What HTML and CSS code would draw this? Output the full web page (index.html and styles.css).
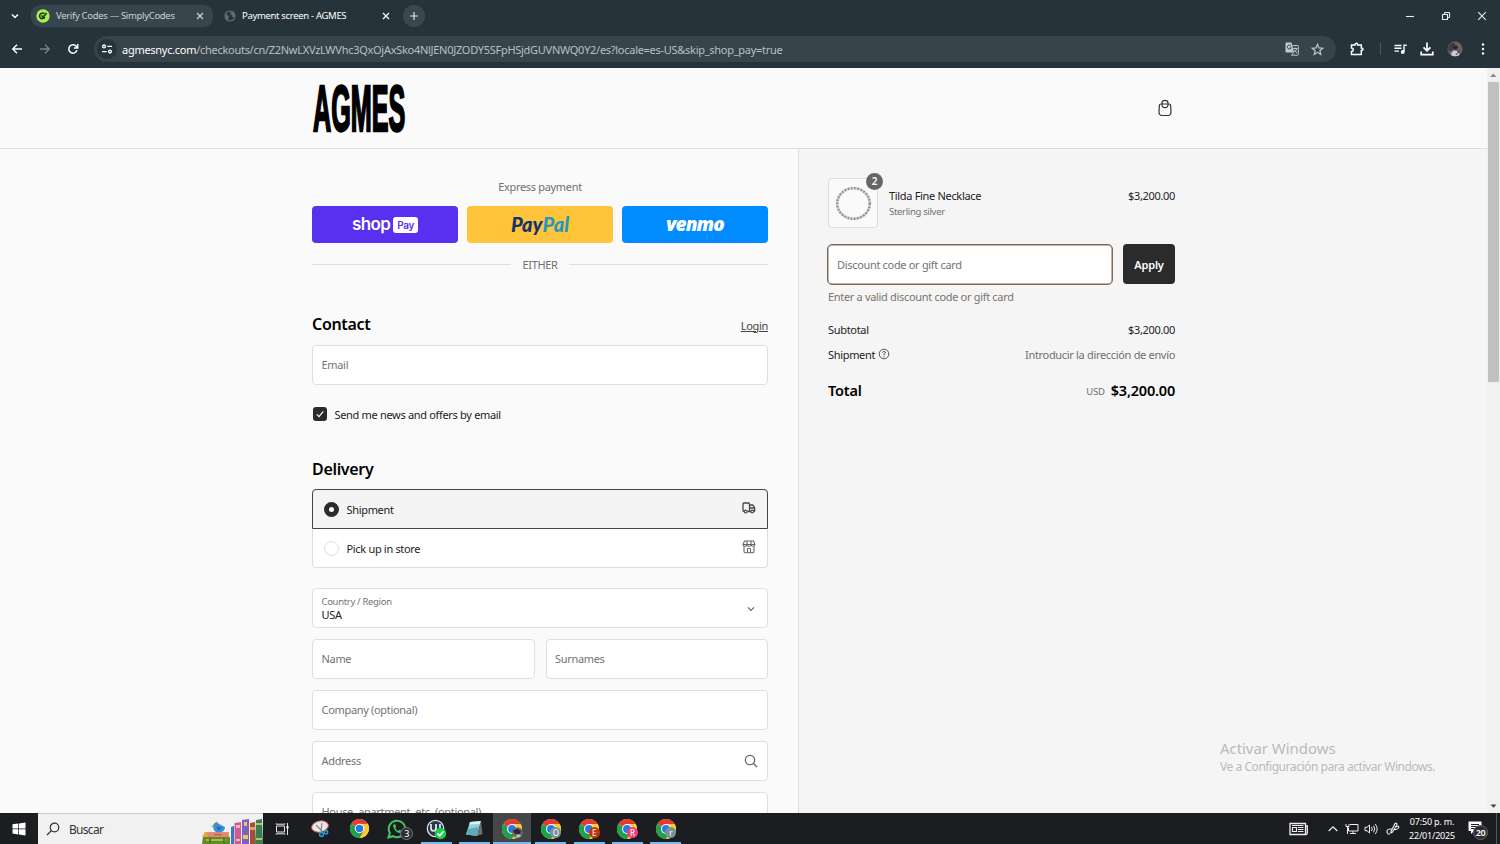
FILE: index.html
```
<!DOCTYPE html>
<html lang="en">
<head>
  <meta charset="UTF-8">
  <meta name="viewport" content="width=device-width, initial-scale=1.0">
  <title>Payment screen - AGMES</title>
  <link rel="stylesheet" href="styles.css">
</head>
<body>
  <!-- Shared icons -->
  <svg class="sprite" width="0" height="0">
    <symbol id="chrome" viewBox="0 0 24 24">
      <circle cx="12" cy="12" r="12" fill="#fff"/>
      <path d="M12 12 1.6 6A12 12 0 0 1 22.4 6Z" fill="#e33b2e"/>
      <path d="M12 12 22.4 6A12 12 0 0 1 12 24Z" fill="#fcc934"/>
      <path d="M12 12 12 24A12 12 0 0 1 1.6 6Z" fill="#1fa04b"/>
      <path d="M12 6H22.4L17.2 15Z" fill="#fcc934"/>
      <path d="M12 6H22.4L21.5 5H11Z" fill="#e33b2e"/>
      <path d="M17.2 15 12 24 8 17Z" fill="#1fa04b"/>
      <circle cx="12" cy="12" r="6" fill="#fff"/>
      <circle cx="12" cy="12" r="4.7" fill="#2b78e4"/>
    </symbol>
    <symbol id="close" viewBox="0 0 10 10">
      <path d="M2 2 8 8M8 2 2 8" fill="none" stroke="currentColor" stroke-width="1.2"/>
    </symbol>
  </svg>

  <div class="window">
    <!-- Browser tabs -->
    <div class="tabs">
      <svg class="tabs__menu" width="10" height="10" viewBox="0 0 10 10"><path d="M2 3.5 5 6.5 8 3.5" fill="none" stroke="#fff" stroke-width="1.5"/></svg>
      <div class="tab tab--idle">
        <svg width="14" height="14" viewBox="0 0 14 14"><circle cx="7" cy="7" r="6.7" fill="#a5f04c"/><path d="M8.5 4.3H5.8a2.7 2.7 0 1 0 3 3.6M5.6 6.4 7 8.2 10.6 4" fill="none" stroke="#18351d" stroke-width="1.5"/></svg>
        <span class="tab__title">Verify Codes — SimplyCodes</span>
        <svg class="tab__close" width="10" height="10"><use href="#close"/></svg>
      </div>
      <div class="tab tab--active">
        <svg width="12" height="12" viewBox="0 0 12 12"><circle cx="6" cy="6" r="5" fill="none" stroke="#646d72" stroke-width="1.2"/><path d="M1 4 4 5.2 5.2 7 4 8.2 4.6 10.7 2.2 9.6ZM5.5 1.2 8.7 1.8 10.8 5 10.6 7.6 8.2 6.8 8 5 6 4.6 7 3Z" fill="#646d72"/></svg>
        <span class="tab__title">Payment screen - AGMES</span>
        <svg class="tab__close" width="10" height="10"><use href="#close"/></svg>
      </div>
      <div class="tabs__new"><svg width="10" height="10" viewBox="0 0 10 10"><path d="M5 1V9M1 5H9" stroke="#dde3e5" stroke-width="1.2"/></svg></div>
      <div class="tabs__controls">
        <svg width="10" height="10" viewBox="0 0 10 10"><path d="M1 5.5H9" stroke="#e8eced" stroke-width="1.1"/></svg>
        <svg width="10" height="10" viewBox="0 0 10 10"><path d="M1.5 3.5H6.5V8.5H1.5ZM3.5 3.5V2Q3.5 1.5 4 1.5H8Q8.5 1.5 8.5 2V6Q8.5 6.5 8 6.5H6.5" fill="none" stroke="#e8eced" stroke-width="1.1"/></svg>
        <svg width="10" height="10" viewBox="0 0 10 10"><path d="M1.2 1.2 8.8 8.8M8.8 1.2 1.2 8.8" stroke="#e8eced" stroke-width="1.1"/></svg>
      </div>
    </div>

    <!-- Address bar -->
    <div class="toolbar">
      <div class="toolbar__nav">
        <svg width="12" height="12" viewBox="0 0 12 12"><path d="M11 6H2M6 1.7 1.7 6 6 10.3" fill="none" stroke="#fff" stroke-width="1.4"/></svg>
        <svg width="12" height="12" viewBox="0 0 12 12"><path d="M1 6H10M6 1.7 10.3 6 6 10.3" fill="none" stroke="#79848a" stroke-width="1.3"/></svg>
        <svg width="12" height="12" viewBox="0 0 12 12"><path d="M10 7.3A4.2 4.2 0 1 1 9.2 3.2L10.5 4.7M10.7 1V4.9H6.9" fill="none" stroke="#fff" stroke-width="1.5"/></svg>
      </div>
      <div class="omnibox">
        <div class="omnibox__site"><svg width="12" height="12" viewBox="0 0 12 12"><g fill="none" stroke="#fff" stroke-width="1.3"><circle cx="3" cy="3.4" r="1.4"/><path d="M6.3 3.4H11M1 8.6H5.7"/><circle cx="9" cy="8.6" r="1.4"/></g></svg></div>
        <div class="omnibox__url"><b>agmesnyc.com</b>/checkouts/cn/Z2NwLXVzLWVhc3QxOjAxSko4NlJEN0JZODY5SFpHSjdGUVNWQ0Y2/es?locale=es-US&amp;skip_shop_pay=true</div>
        <svg width="14" height="14" viewBox="0 0 14 14"><path d="M1.5.5H6.5L9 10.5H1.5Q.5 10.5.5 9.5V1.5Q.5.5 1.5.5Z" fill="#c3c9cb"/><path d="M6 3.900A2 2 0 1 0 6.200 5.800H4.600" fill="none" stroke="#39454b"/><path d="M7.500 3.500H12.500Q13.300 3.500 13.300 4.300V12.300Q13.300 13.200 12.500 13.200H6.500L8.700 10.500M8.300 6.500H12.500M10.300 5.500V6.500M11.800 6.500Q11 9 9.200 10.200M9 7.500 12 11" fill="none" stroke="#c3c9cb"/></svg>
        <svg width="13" height="13" viewBox="0 0 24 24"><path d="m12 2.500 2.700 6.600 7 .5-5.400 4.600 1.700 6.900-6-3.800-6 3.800 1.700-6.900L2.300 9.600l7-.5Z" fill="none" stroke="#c3c9cb" stroke-width="2.200"/></svg>
      </div>
      <div class="toolbar__actions">
        <svg width="14" height="14" viewBox="0 0 14 14"><path d="M1.500 3H5Q5 1.200 6.300 1.200T7.600 3H11.300V6Q13 6 13 7.200T11.300 8.500V12.500H1.500V9.500Q3.300 9.200 3.300 7.700T1.500 6Z" fill="none" stroke="#fff" stroke-width="1.500"/></svg>
        <i class="toolbar__line"></i>
        <svg width="13" height="13" viewBox="0 0 13 13"><path d="M.5 2.500H7.500M.5 5.300H7.500M.5 8.100H5M10 9V2.200H12.700" fill="none" stroke="#fff" stroke-width="1.400"/><circle cx="8.700" cy="9" r="1.900" fill="#fff"/></svg>
        <svg width="14" height="14" viewBox="0 0 14 14"><path d="M7 .5V8.500M3.500 5.300 7 8.700 10.500 5.300M1.200 9.500V12.600H12.800V9.500" fill="none" stroke="#fff" stroke-width="1.700"/></svg>
        <svg width="16" height="16" viewBox="0 0 16 16"><circle cx="8" cy="8" r="7.500" fill="#72605f"/><path d="M3 3Q6 1 8 2L7 8 2 11Q0 7 3 3Z" fill="#443942"/><circle cx="8.500" cy="6.500" r="2.300" fill="#35252a"/><path d="M4 14Q5 9 8 9.500T12.500 14Q8 16.500 4 14Z" fill="#c5cbdc"/><path d="M9 14 13 9" stroke="#39435f"/></svg>
        <svg class="toolbar__more" width="4" height="14" viewBox="0 0 4 14"><g fill="#fff"><circle cx="2" cy="2.500" r="1.200"/><circle cx="2" cy="7" r="1.200"/><circle cx="2" cy="11.500" r="1.200"/></g></svg>
      </div>
    </div>

    <!-- Checkout page -->
    <div class="viewport">
      <div class="page">
        <header class="header">
          <svg class="logo" width="94" height="52" viewBox="0 0 94 52"><text transform="translate(1 48.500) scale(.393 1)">AGMES</text></svg>
          <svg class="bag" width="14" height="18" viewBox="0 0 14 18"><path d="M3 5H11Q12.500 5 12.600 6.400L13 12.500Q13.200 16.500 10 16.500H4Q.8 16.500 1 12.500L1.400 6.400Q1.500 5 3 5ZM4 5V4Q4 1.300 7 1.300T10 4V5.500Q10 8.700 7 8.700T4 5.500Z" fill="none" stroke="#333" stroke-width="1.200"/></svg>
        </header>

        <main class="checkout">
          <section class="form">
            <p class="express__title">Express payment</p>
            <div class="express">
              <div class="pay pay--shop"><span class="pay__shop">shop</span><span class="pay__badge">Pay</span></div>
              <div class="pay pay--paypal"><span>Pay</span><span class="pay__pal">Pal</span></div>
              <div class="pay pay--venmo">venmo</div>
            </div>
            <div class="either"><span>EITHER</span></div>

            <div class="heading">
              <h2>Contact</h2>
              <a class="login">Login</a>
            </div>
            <div class="field">Email</div>
            <div class="newsletter">
              <span class="checkbox"><svg width="10" height="10" viewBox="0 0 10 10"><path d="M1.700 5.400 4 7.700 8.300 2.300" fill="none" stroke="#fff" stroke-width="1.200"/></svg></span>
              <span>Send me news and offers by email</span>
            </div>

            <h2 class="delivery">Delivery</h2>
            <div class="options">
              <div class="option option--selected">
                <span class="radio radio--on"></span><span>Shipment</span>
                <svg class="option__icon" width="14" height="12" viewBox="0 0 14 12"><path d="M2.200 9.500Q1 9.500 1 8.300V2Q1 1 2 1H6.500Q7.500 1 7.500 2V9.500H5.300M7.500 3H10.200Q11 3 11.400 3.800L12.700 6.200V8.500Q12.700 9.500 11.700 9.500M9 9.500H7.500M7.500 6H12.500" fill="none" stroke="#444" stroke-width="1.300"/><circle cx="3.700" cy="9.500" r="1.400" fill="none" stroke="#444" stroke-width="1.100"/><circle cx="10.300" cy="9.500" r="1.400" fill="none" stroke="#444" stroke-width="1.100"/></svg>
              </div>
              <div class="option">
                <span class="radio"></span><span>Pick up in store</span>
                <svg class="option__icon" width="14" height="14" viewBox="0 0 14 14"><path d="M2.500 1H11.500L13 4.500Q12.800 6.300 11 6.300T9 4.500Q9 6.300 7 6.300T5 4.500Q5 6.300 3 6.300T1 4.500ZM1 4.500H13M5 1V4.500M9 1V4.500M2 6V11.500Q2 12.700 3.200 12.700H10.800Q12 12.700 12 11.500V6M5.500 12.500V9Q5.500 8.300 7 8.300T8.500 9V12.500" fill="none" stroke="#666" stroke-width="1.100"/></svg>
              </div>
            </div>

            <div class="fields">
              <div class="field field--select">
                <div><small>Country / Region</small><span>USA</span></div>
                <svg width="8" height="8" viewBox="0 0 8 8"><path d="M1 2.300 4 5.300 7 2.300" fill="none" stroke="#666" stroke-width="1.200"/></svg>
              </div>
              <div class="row">
                <div class="field">Name</div>
                <div class="field">Surnames</div>
              </div>
              <div class="field">Company (optional)</div>
              <div class="field field--search">Address
                <svg width="14" height="14" viewBox="0 0 14 14"><circle cx="6" cy="6" r="4.700" fill="none" stroke="#666" stroke-width="1.200"/><path d="M9.500 9.500 13 13" stroke="#666" stroke-width="1.200"/></svg>
              </div>
              <div class="field">House, apartment, etc. (optional)</div>
            </div>
          </section>

          <aside class="summary">
            <div class="product">
              <div class="product__image">
                <svg width="40" height="40" viewBox="0 0 40 40"><ellipse cx="20.500" cy="20.500" rx="16.300" ry="15.300" fill="none" stroke="#cfcfcf" stroke-width="2.800"/><ellipse cx="20.500" cy="20.500" rx="16.300" ry="15.300" fill="none" stroke="#8a8a8a" stroke-width="2.200" stroke-dasharray="1.400 1.850"/></svg>
                <span class="product__count">2</span>
              </div>
              <div class="product__name"><span>Tilda Fine Necklace</span><small>Sterling silver</small></div>
              <span class="product__price">$3,200.00</span>
            </div>
            <div class="discount">
              <div class="discount__input">Discount code or gift card</div>
              <button class="discount__apply">Apply</button>
            </div>
            <p class="discount__error">Enter a valid discount code or gift card</p>
            <div class="line"><span>Subtotal</span><span class="price">$3,200.00</span></div>
            <div class="line line--shipment">
              <span>Shipment</span>
              <svg width="12" height="12" viewBox="0 0 12 12"><circle cx="6" cy="6" r="4.800" fill="none" stroke="#555"/><path d="M4.500 4.700Q4.700 3.500 6 3.500T7.500 4.700Q7.500 5.400 6 6V7.200" fill="none" stroke="#555"/><circle cx="6" cy="8.600" r=".7" fill="#555"/></svg>
              <span class="line__muted">Introducir la dirección de envío</span>
            </div>
            <div class="total"><span>Total</span><small>USD</small><span class="total__price">$3,200.00</span></div>
          </aside>
        </main>
      </div>
      <div class="scrollbar">
        <svg width="13" height="14" viewBox="0 0 13 14"><path d="M3 9H9.500L6.300 5.500Z" fill="#8b8b8b"/></svg>
        <div class="scrollbar__thumb"></div>
        <svg class="scrollbar__down" width="13" height="14" viewBox="0 0 13 14"><path d="M3.500 5.500H9.500L6.500 8.700Z" fill="#444"/></svg>
      </div>
      <div class="watermark"><p>Activar Windows</p><span>Ve a Configuración para activar Windows.</span></div>
    </div>

    <!-- Windows taskbar -->
    <div class="taskbar">
      <div class="taskbar__start"><svg width="14" height="14" viewBox="0 0 14 14"><path d="M.5 2.300 6.300 1.500V6.600H.5ZM7 1.400 13.500.5V6.600H7ZM.5 7.300H6.300V12.400L.5 11.600ZM7 7.300H13.500V13.400L7 12.500Z" fill="#fff"/></svg></div>
      <div class="taskbar__search">
        <svg width="14" height="14" viewBox="0 0 14 14"><circle cx="8.500" cy="5.500" r="4.300" fill="none" stroke="#333" stroke-width="1.200"/><path d="M5.500 8.500 1 13" stroke="#333" stroke-width="1.200"/></svg>
        <span>Buscar</span>
        <svg class="books" width="61" height="27" viewBox="0 0 61 27">
          <path d="M0 20 3 15H27V20Z" fill="#e7a63d"/><path d="M5 15.500H25L27 20H6Z" fill="#e2867c"/><path d="M12 17H20V18.500H12Z" fill="#c8605f"/><path d="M1 20H28V27H0Z" fill="#648b28"/><path d="M4 22H24V24H4Z" fill="#a8bc38"/><path d="M7 21H9V27H7ZM21 21H23V27H21Z" fill="#4c7a1d"/>
          <path d="M11 8Q14 3 17 7L23 10Q23 15 17 15.500T11 8Z" fill="#3b91d8"/><path d="M14 10 20 10 17 14Z" fill="#236eb5"/><path d="M11 8 9 9.500 12 11ZM14.500 4 13.500 6H16Z" fill="#e7a438"/>
          <path d="M29 10 32 9V27H29Z" fill="#3e74c5"/><path d="M32.500 6 39 5V27H32.500Z" fill="#ce5b91"/><path d="M34 8H38V11H34ZM34 22H38V24H34Z" fill="#f0b6b7"/><path d="M40 3 47 2V27H40Z" fill="#7d60c2"/><path d="M42 5H45V9H42ZM41 18H46V22H41Z" fill="#f3c65d"/><path d="M48 6 53 5V27H48Z" fill="#a74f36"/><path d="M48 10H53V13H48Z" fill="#e7a35d"/><path d="M54 3 60 2 61 27H53Z" fill="#358052"/><path d="M54 6H60V8H54ZM54 21H60V23H54Z" fill="#d9b657"/>
        </svg>
      </div>
      <div class="task task--view"><svg width="14" height="14" viewBox="0 0 14 14"><path d="M1.500 4H9.500V10H1.500ZM1 1.500V2.200H10V1.500M1 12.500V11.800H10V12.500M12.500 1V13" fill="none" stroke="#e5e5e5"/><path d="M11.500 4H13.500V6.500H11.500Z" fill="#fff"/></svg></div>
      <div class="task task--snip"><svg width="20" height="18" viewBox="0 0 20 18"><ellipse cx="10" cy="6.500" rx="8.500" ry="5.500" fill="#e8e8e8" stroke="#c84e4b" transform="rotate(-12 10 6.500)"/><path d="M6 5 12 11M12 3 11 11" stroke="#888" stroke-width="1.200"/><g fill="none" stroke="#2e9cdc" stroke-width="1.500"><circle cx="11.500" cy="14.500" r="1.900"/><circle cx="16" cy="12.300" r="1.700"/></g></svg></div>
      <div class="task"><svg width="19" height="19"><use href="#chrome"/></svg></div>
      <div class="task">
        <svg width="21" height="20" viewBox="0 0 21 20"><path d="M1.500 18.500 2.800 14A8.300 8.300 0 1 1 6 17.200Z" fill="none" stroke="#42c765" stroke-width="2"/><path d="M7 5.300Q5 7 7.500 10.500T13 14Q15 13.600 14.700 11.700L12.500 10.700 11.300 12Q9 11 8.200 8.800L9.200 7.700 8.300 5.300Z" fill="#42c765"/></svg>
        <span class="task__count">3</span>
      </div>
      <div class="task task--open"><svg width="22" height="22" viewBox="0 0 22 22"><circle cx="10.500" cy="10.500" r="8.200" fill="#27364b" stroke="#d9e1e8" stroke-width="1.300"/><path d="M6 6V10Q6 13 8.500 13T11 10V6M11 10Q11 13 13 13T15 10V6" fill="none" stroke="#e8edf2" stroke-width="1.700"/><circle cx="15.500" cy="15.500" r="5.700" fill="#19ce50"/><path d="M12.500 15.500 14.700 17.700 18.500 13.300" fill="none" stroke="#fff" stroke-width="1.700"/></svg></div>
      <div class="task task--open"><svg width="20" height="18" viewBox="0 0 20 18"><path d="M6 2 17 1 13 16 2 14.500Z" fill="#94cfdb"/><path d="M6 2 17 1 16 4 5.300 4.500Z" fill="#e1eeee"/><path d="M17 1 18.500 14 13 16Z" fill="#67736d"/><path d="M4 9 15 7 13 16 2 14.500Z" fill="#5dabbc"/></svg></div>
      <div class="task task--open task--active"><svg width="20" height="20"><use href="#chrome"/></svg><svg class="task__photo" width="12" height="12" viewBox="0 0 12 12"><circle cx="6" cy="6" r="5.800" fill="#6d6466"/><path d="M1 4 6 2 10 5 8 8 3 7Z" fill="#2c252b"/><path d="M4 11Q5 7 8 8L10 10Q7 12.500 4 11Z" fill="#b7bdc9"/></svg></div>
      <div class="task task--open"><svg width="20" height="20"><use href="#chrome"/></svg><span class="task__badge">O</span></div>
      <div class="task task--open"><svg width="20" height="20"><use href="#chrome"/></svg><span class="task__badge task__badge--red">E</span></div>
      <div class="task task--open"><svg width="20" height="20"><use href="#chrome"/></svg><span class="task__badge task__badge--pink">R</span></div>
      <div class="task task--open"><svg width="20" height="20"><use href="#chrome"/></svg><span class="task__badge">r</span></div>

      <div class="tray">
        <svg width="19" height="14" viewBox="0 0 19 14"><path d="M1 1.500H16.500V12.500H1ZM16.500 4H18.300V11Q18.300 12.500 17 12.500" fill="none" stroke="#eee" stroke-width="1.300"/><path d="M3.500 5.500H7.500V9.500H3.500ZM9 5.500H14.500M9 7.500H14.500M9 9.500H14.500M3 3.500H14.500" fill="none" stroke="#eee" stroke-width="1.200"/></svg>
        <svg class="tray__up" width="10" height="8" viewBox="0 0 10 8"><path d="M.7 6 5 1.800 9.300 6" fill="none" stroke="#eee" stroke-width="1.200"/></svg>
        <svg class="tray__net" width="14" height="12" viewBox="0 0 14 12"><path d="M5 1.500H13V8H3.500V4.500M8 8V10.500M5 10.500H11M1 1V3.500H4V1M2.500 3.500V11" fill="none" stroke="#eee"/></svg>
        <svg class="tray__sound" width="14" height="12" viewBox="0 0 14 12"><path d="M1 4.300H3L5.500 2V10L3 7.700H1ZM7.500 4Q9 6 7.500 8M9.500 2.700Q12 6 9.500 9.300M11.300 1Q15 6 11.300 11" fill="none" stroke="#eee"/></svg>
        <svg class="tray__pen" width="14" height="13" viewBox="0 0 14 13"><path d="M5 9.500 9 1.500Q11 .5 11 2.500L6.500 10Q4 12 5 9.500ZM6 7Q1 6.500 1 9.500T4 12M9 5Q14 3 12.500 6 11 8 8 7.500" fill="none" stroke="#eee" stroke-width="1.100"/></svg>
        <div class="clock"><span>07:50 p. m.</span><span>22/01/2025</span></div>
        <div class="notice"><svg width="14" height="14" viewBox="0 0 14 14"><path d="M.5.500H13.500V10H6L3 13V10H.5Z" fill="#fff"/><path d="M3 3.500H11M3 5.500H11M3 7.500H8" stroke="#222"/></svg><span class="notice__count">20</span></div>
        <i class="tray__desktop"></i>
      </div>
    </div>
  </div>
</body>
</html>
```
FILE: styles.css
```
* {
  box-sizing: border-box;
}

body {
  margin: 0;
  font-family: "Noto Sans", "Open Sans", sans-serif;
  font-size: 11px;
  letter-spacing: -0.32px;
  color: #222;
  overflow: hidden;
}

p,
h2 {
  margin: 0;
}

svg {
  display: block;
  flex: none;
}

span {
  white-space: nowrap;
}

.sprite {
  position: absolute;
}

.window {
  display: flex;
  flex-direction: column;
  width: 1500px;
  height: 844px;
}

/* Tabs */
.tabs {
  display: flex;
  align-items: center;
  height: 31px;
  padding: 0 13px 0 10px;
  background: #26333a;
}

.tabs__menu {
  margin-right: 11px;
}

.tab {
  display: flex;
  align-items: center;
  height: 22px;
  border-radius: 9px;
  font-size: 9.5px;
}

.tab--idle {
  width: 182px;
  padding: 0 8px 0 5px;
  background: #37454c;
  color: #cbd2d5;
}

.tab--active {
  width: 181px;
  padding: 0 3px 0 11px;
  color: #fff;
}

.tab__title {
  margin-left: 6px;
}

.tab__close {
  margin-left: auto;
}

.tabs__new {
  display: grid;
  place-items: center;
  width: 22px;
  height: 22px;
  margin-left: 9px;
  border-radius: 50%;
  background: #3b484e;
}

.tabs__controls {
  display: flex;
  gap: 26px;
  margin-left: auto;
}

/* Toolbar */
.toolbar {
  display: flex;
  align-items: center;
  height: 37px;
  padding: 0 15px 1px 11px;
  background: #26333a;
}

.toolbar__nav {
  display: flex;
  gap: 16px;
  margin-right: 15px;
}

.omnibox {
  display: flex;
  align-items: center;
  width: 1242px;
  height: 26px;
  padding: 0 12px 0 3px;
  border-radius: 13px;
  background: #37444a;
  gap: 12px;
}

.omnibox__site {
  display: grid;
  place-items: center;
  width: 20px;
  height: 20px;
  border-radius: 50%;
  background: #27343a;
}

.omnibox__url {
  flex: 1;
  margin-left: -7px;
  color: #b9c0c3;
  letter-spacing: -0.28px;
}

.omnibox__url b {
  font-weight: 400;
  color: #fff;
}

.toolbar__actions {
  display: flex;
  flex: 1;
  align-items: center;
  justify-content: space-between;
  padding-left: 14px;
}

.toolbar__line {
  width: 1px;
  height: 12px;
  margin-left: 3px;
  background: #4c5a60;
}

.toolbar__more {
  margin-left: 5px;
}

/* Page */
.viewport {
  position: relative;
  display: flex;
  height: 745px;
  overflow: hidden;
}

.page {
  width: 1487px;
  background: #fafafa;
}

.header {
  display: flex;
  align-items: center;
  justify-content: space-between;
  height: 81px;
  padding: 0 315px 0 312px;
  border-bottom: 1px solid #dedede;
}

.logo {
  overflow: visible;
}

.logo text {
  font: bold 64px "Liberation Sans", sans-serif;
  letter-spacing: 0;
  fill: #000;
  stroke: #000;
  stroke-width: 2.5px;
}

.checkout {
  display: flex;
  height: 664px;
}

.form {
  width: 799px;
  padding: 29px 30px 0 312px;
  border-right: 1px solid #dedede;
}

.express__title {
  color: #707070;
  line-height: 18px;
  text-align: center;
}

.express {
  display: grid;
  grid-template-columns: repeat(3, 1fr);
  gap: 9px;
  margin-top: 10px;
}

.pay {
  display: flex;
  align-items: center;
  justify-content: center;
  height: 37px;
  padding-bottom: 2px;
  border-radius: 4px;
  font-family: Lato, sans-serif;
  font-size: 19px;
  font-weight: 900;
  letter-spacing: 0;
  line-height: 20px;
}

.pay--shop {
  background: #592ff0;
  color: #fff;
}

.pay__shop {
  font-family: Inter, sans-serif;
  font-size: 17px;
  font-weight: 600;
  letter-spacing: -0.6px;
}

.pay__badge {
  height: 16px;
  margin: 2px 0 0 3px;
  padding: 0 4px;
  border-radius: 3px;
  background: #fff;
  color: #592ff0;
  font-family: Inter, sans-serif;
  font-size: 10px;
  font-weight: 600;
  line-height: 16px;
  letter-spacing: -0.4px;
}

.pay--paypal {
  background: #ffc439;
  color: #14336f;
  font-size: 20px;
  font-style: italic;
}

.pay__pal {
  color: #2797bd;
}

.pay--venmo {
  background: #008cff;
  color: #fff;
  font-family: "Open Sans", sans-serif;
  font-size: 19px;
  font-weight: 800;
  font-style: italic;
  letter-spacing: -0.9px;
}

.either {
  display: flex;
  align-items: center;
  gap: 11px;
  height: 18px;
  margin-top: 12px;
  color: #707070;
}

.either::before,
.either::after {
  content: "";
  flex: 1;
  height: 1px;
  background: #dedede;
}

.heading {
  display: flex;
  justify-content: space-between;
  align-items: center;
  height: 24px;
  margin-top: 39px;
}

h2 {
  font-size: 16px;
  font-weight: 600;
  line-height: 24px;
  color: #000;
}

.login {
  margin-top: 2px;
  color: #444;
  text-decoration: underline;
}

.field {
  display: flex;
  align-items: center;
  height: 40px;
  padding: 0 9px 1px 8.5px;
  border: 1px solid #dedede;
  border-radius: 4px;
  background: #fff;
  color: #737373;
}

.heading + .field {
  margin-top: 9px;
}

.newsletter {
  display: flex;
  align-items: center;
  gap: 7.5px;
  height: 18px;
  margin-top: 20px;
  padding-left: 1px;
}

.checkbox {
  display: grid;
  place-items: center;
  width: 14px;
  height: 14px;
  border-radius: 3px;
  background: #2b2b2b;
}

.delivery {
  margin-top: 34px;
}

.options {
  margin-top: 8px;
}

.option {
  display: flex;
  align-items: center;
  gap: 7.5px;
  height: 39px;
  padding: 0 11px;
  border: 1px solid #dedede;
  border-top: 0;
  border-radius: 0 0 4px 4px;
  background: #fff;
}

.option--selected {
  height: 40px;
  border: 1px solid #444;
  border-radius: 4px 4px 0 0;
  background: #f4f4f4;
}

.option__icon {
  margin: -3px 0 0 auto;
}

.radio {
  width: 15px;
  height: 15px;
  border: 1px solid #dedede;
  border-radius: 50%;
  background: #fff;
}

.radio--on {
  border: 5px solid #2b2b2b;
}

.fields {
  display: grid;
  gap: 11px;
  margin-top: 20px;
}

.field--select,
.field--search {
  justify-content: space-between;
}

.field--search svg {
  margin-top: 1px;
}

.field--select {
  padding: 0 12px 0 8.5px;
}

.field--select svg {
  margin-top: 2px;
}

.field--select div {
  display: grid;
  color: #222;
  line-height: 13px;
}

.field--select small {
  color: #737373;
  font-size: 9.5px;
}

.row {
  display: grid;
  grid-template-columns: 1fr 1fr;
  gap: 11px;
}

/* Order summary */
.summary {
  flex: 1;
  padding: 29px 312px 0 29px;
  background: #f5f5f5;
}

.product {
  display: flex;
  align-items: center;
}

.product__image {
  position: relative;
  display: grid;
  place-items: center;
  width: 50px;
  height: 50px;
  border: 1px solid #dedede;
  border-radius: 4px;
  background: #fafafa;
}

.product__count {
  position: absolute;
  top: -6px;
  right: -6px;
  width: 17px;
  height: 17px;
  border-radius: 50%;
  background: #666;
  color: #fff;
  font-size: 10px;
  font-weight: 600;
  line-height: 17px;
  text-align: center;
}

.product__name {
  display: grid;
  margin-left: 11px;
  line-height: 16px;
}

.product__name small {
  color: #707070;
  font-size: 9.5px;
  line-height: 15px;
}

.product__price {
  margin: -15px 0 0 auto;
}

.discount {
  display: flex;
  gap: 10px;
  margin: 16px 0 0 -1px;
}

.discount__input {
  flex: 1;
  height: 41px;
  padding-left: 9px;
  border: 1px solid #7b6a59;
  border-radius: 5px;
  box-shadow: inset 0 0 0 0.5px #7b6a59;
  background: #fff;
  color: #737373;
  line-height: 40px;
}

.discount__apply {
  width: 52px;
  height: 40px;
  padding: 0;
  border: 0;
  border-radius: 4px;
  background: #2b2b2b;
  color: #fff;
  font: 600 11px "Noto Sans", sans-serif;
  letter-spacing: -0.2px;
}

.discount__error {
  margin-top: 4px;
  color: #7d7369;
  line-height: 16px;
}

.line {
  display: flex;
  align-items: center;
  height: 18px;
  margin-top: 15px;
}

.line .price,
.line__muted {
  margin-left: auto;
}

.line--shipment {
  gap: 3px;
  margin-top: 7px;
}

.line__muted {
  color: #707070;
}

.total {
  display: flex;
  align-items: center;
  height: 24px;
  margin-top: 15px;
  color: #000;
  font-size: 14.5px;
  font-weight: 600;
  letter-spacing: -0.2px;
}

.total small {
  margin: 2px 6px 0 auto;
  color: #707070;
  font-size: 9.5px;
  font-weight: 400;
}

.scrollbar {
  display: flex;
  flex-direction: column;
  width: 13px;
  background: #f1f1f1;
}

.scrollbar__thumb {
  width: 11px;
  height: 300px;
  margin-left: 1px;
  background: #c1c1c1;
}

.scrollbar__down {
  margin-top: auto;
}

.watermark {
  position: absolute;
  left: 1220px;
  top: 670px;
  color: #bababa;
  font-size: 12px;
  line-height: 16px;
  letter-spacing: -0.45px;
}

.watermark p {
  font-size: 15px;
  line-height: 21px;
  letter-spacing: -0.05px;
}

/* Taskbar */
.taskbar {
  display: flex;
  flex: 1;
  background: #1c1d20;
}

.taskbar__start {
  display: grid;
  place-items: center;
  width: 38px;
}

.taskbar__search {
  display: flex;
  align-items: center;
  width: 225px;
  padding-left: 8px;
  background: #f1f1f1;
  border-top: 1px solid #ccc;
  color: #333;
  font-size: 12px;
}

.taskbar__search span {
  margin-left: 9px;
  letter-spacing: -0.7px;
}

.books {
  align-self: flex-end;
  margin-left: auto;
}

.task {
  position: relative;
  display: grid;
  place-items: center;
  width: 38.3px;
}

.task--view {
  width: 37px;
}

.task--snip {
  width: 40px;
}

.task--open::after {
  content: "";
  position: absolute;
  bottom: 0;
  left: 4px;
  width: 31px;
  height: 2px;
  background: #76b9ed;
}

.task--active {
  background: #464748;
}

.task--active::after {
  left: 0;
  width: 38px;
}

.task__badge,
.task__photo,
.task__count {
  position: absolute;
  left: 19px;
  top: 14px;
  width: 11px;
  height: 11px;
}

.task__badge,
.task__count {
  border-radius: 50%;
  background: #78909c;
  color: #fff;
  font-size: 8px;
  letter-spacing: 0;
  line-height: 11px;
  text-align: center;
}

.task__badge--red {
  background: #bf360c;
}

.task__badge--pink {
  background: #ec407a;
}

.task__count {
  left: 22px;
  width: 13px;
  height: 13px;
  border: 1px solid #777;
  background: #2d2d2d;
  font-size: 9px;
}

.tray {
  display: flex;
  align-items: center;
  margin-left: auto;
  padding-right: 3px;
  color: #fff;
}

.tray__up {
  margin-left: 20px;
}

.tray__net {
  margin-left: 7px;
}

.tray__sound {
  margin-left: 5px;
}

.tray__pen {
  margin-left: 8px;
}

.tray__desktop {
  align-self: stretch;
  width: 1px;
  background: #55575a;
}

.clock {
  display: grid;
  width: 50px;
  margin-left: 7px;
  font-size: 9px;
  line-height: 14px;
  text-align: center;
  letter-spacing: -0.2px;
}

.notice {
  position: relative;
  width: 28px;
  height: 16px;
  margin-left: 11px;
}

.notice__count {
  position: absolute;
  left: 5px;
  top: 4px;
  width: 15px;
  height: 15px;
  border: 1px solid #666;
  border-radius: 50%;
  background: #2d2d2d;
  font-size: 9px;
  font-weight: 600;
  line-height: 13px;
  text-align: center;
}
```
